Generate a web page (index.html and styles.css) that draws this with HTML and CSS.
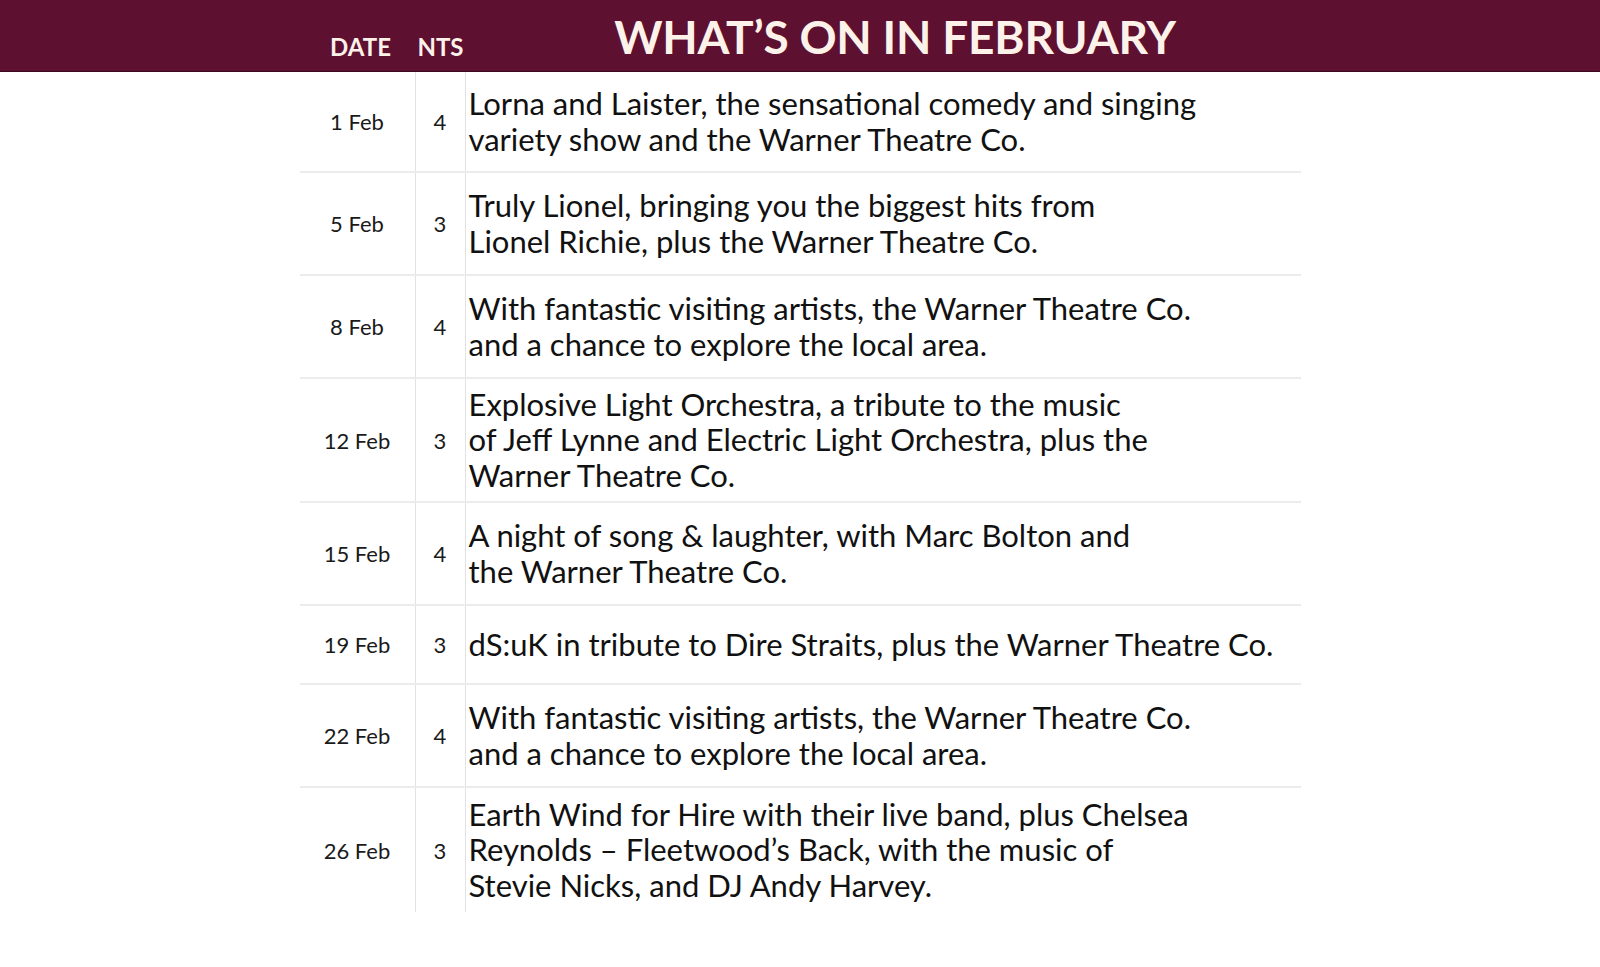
FILE: index.html
```html
<!DOCTYPE html>
<html lang="en">
<head>
<meta charset="utf-8">
<title>What's on in February</title>
<link rel="stylesheet" href="styles.css">
</head>
<body>
<header class="bar">
  <div class="bar-inner">
    <div class="lbl lbl-date">DATE</div>
    <div class="lbl lbl-nts">NTS</div>
    <h1 class="title">WHAT’S ON IN FEBRUARY</h1>
  </div>
</header>
<main class="table">
  <div class="row l2 first"><div class="c-date">1 Feb</div><div class="c-nts">4</div><div class="c-desc">Lorna and Laister, the sensational comedy and singing<br>variety show and the Warner Theatre Co.</div></div>
  <div class="row l2"><div class="c-date">5 Feb</div><div class="c-nts">3</div><div class="c-desc">Truly Lionel, bringing you the biggest hits from<br>Lionel Richie, plus the Warner Theatre Co.</div></div>
  <div class="row l2"><div class="c-date">8 Feb</div><div class="c-nts">4</div><div class="c-desc">With fantastic visiting artists, the Warner Theatre Co.<br>and a chance to explore the local area.</div></div>
  <div class="row l3"><div class="c-date">12 Feb</div><div class="c-nts">3</div><div class="c-desc">Explosive Light Orchestra, a tribute to the music<br>of Jeff Lynne and Electric Light Orchestra, plus the<br>Warner Theatre Co.</div></div>
  <div class="row l2"><div class="c-date">15 Feb</div><div class="c-nts">4</div><div class="c-desc">A night of song &amp; laughter, with Marc Bolton and<br>the Warner Theatre Co.</div></div>
  <div class="row l1"><div class="c-date">19 Feb</div><div class="c-nts">3</div><div class="c-desc">dS:uK in tribute to Dire Straits, plus the Warner Theatre Co.</div></div>
  <div class="row l2"><div class="c-date">22 Feb</div><div class="c-nts">4</div><div class="c-desc">With fantastic visiting artists, the Warner Theatre Co.<br>and a chance to explore the local area.</div></div>
  <div class="row l3 last"><div class="c-date">26 Feb</div><div class="c-nts">3</div><div class="c-desc">Earth Wind for Hire with their live band, plus Chelsea<br>Reynolds – Fleetwood’s Back, with the music of<br>Stevie Nicks, and DJ Andy Harvey.</div></div>
</main>
</body>
</html>
```
FILE: styles.css
```css
* { box-sizing: border-box; }
html, body { margin: 0; padding: 0; background: #ffffff; }
body { font-family: Lato, "Open Sans", sans-serif; color: #151515; }

.bar {
  background: #5e1030;
  height: 72px;
  border-bottom: 1px solid #3f0a20;
}
.bar-inner {
  width: 1001px;
  margin: 0 auto;
  height: 100%;
  display: grid;
  grid-template-columns: 116px 50px 1fr;
  align-items: end;
}
.lbl {
  color: #fdf2ea;
  font-weight: 700;
  font-size: 24px;
  line-height: 1;
  text-align: center;
  padding-bottom: 12px;
}
.lbl-date { padding-left: 6px; }
.title {
  margin: 0;
  color: #fdf2ea;
  font-weight: 700;
  font-size: 46px;
  line-height: 1;
  text-align: center;
  padding-left: 24px;
  padding-bottom: 11px;
  letter-spacing: -0.2px;
}

.table {
  width: 1001px;
  margin: 0 auto;
  display: flex;
  flex-direction: column;
}
.row {
  display: grid;
  grid-template-columns: 116px 50px 1fr;
  border-bottom: 2px solid #ececec;
}
.row.last { border-bottom: none; }
.row.l1 { height: 79px; }
.row.l2 { height: 103px; }
.row.first { height: 101px; }
.row.l3 { height: 124px; }

.c-date, .c-nts, .c-desc {
  display: flex;
  align-items: center;
}
.c-date {
  justify-content: center;
  font-size: 22px;
  border-right: 1px solid #e2e2e2;
  color: #1a1a1a;
}
.c-nts {
  justify-content: center;
  font-size: 22px;
  border-right: 1px solid #e2e2e2;
  color: #1a1a1a;
}
.c-desc {
  padding-left: 3px;
  font-size: 31px;
  line-height: 35.5px;
  color: #111;
}
```
